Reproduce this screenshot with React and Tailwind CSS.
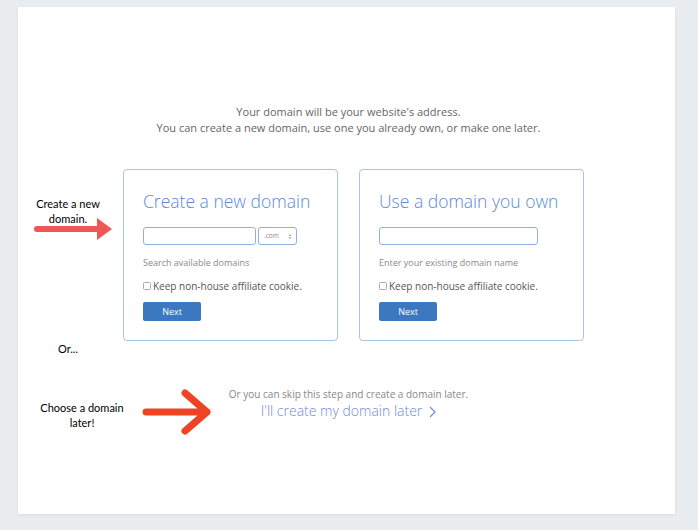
import React from "react";

function Card({ title, wide, hint }) {
  return (
    <div
      className={`${wide ? "w-[225px]" : "w-[215px]"} h-[172px] border border-[#a9c3ea] rounded-[4px] pt-[20px] pl-[19px] pr-[12px] flex flex-col`}
    >
      <div className="text-[17.5px] leading-[23px] text-[#5a8ad9] font-light whitespace-nowrap">{title}</div>
      <div className="flex gap-[2px] mt-[14px]">
        <div className={`${wide ? "w-[159px]" : "w-[113px]"} h-[18px] border border-[#8fb0e2] rounded-[3px] bg-white`} />
        {!wide && (
          <div className="w-[39px] h-[18px] border border-[#8fb0e2] rounded-[3px] bg-white flex items-center justify-between pl-[5px] pr-[4px]">
            <span className="text-[6.5px] text-[#888]">.com</span>
            <svg width="4" height="7" viewBox="0 0 4 7">
              <path d="M0.5 2.8 L2 1 L3.5 2.8 Z M0.5 4.2 L2 6 L3.5 4.2 Z" fill="#999" />
            </svg>
          </div>
        )}
      </div>
      <div className="text-[9px] leading-[14px] text-[#8a8a8a] mt-[11px]">{hint}</div>
      <div className="flex items-center mt-[9px] gap-[2px]">
        <div className="w-[8px] h-[8px] border border-[#aaa] rounded-[1.5px] bg-white" />
        <span className="text-[10px] leading-[14px] text-[#555]">Keep non-house affiliate cookie.</span>
      </div>
      <div className="mt-[9px] w-[58px] h-[19px] bg-[#3b78c0] rounded-[2px] flex items-center justify-center text-white text-[9px]">
        Next
      </div>
    </div>
  );
}

export default function App() {
  return (
    <div
      className="w-[698px] h-[530px] bg-[#e9edf0] pt-[7px] pl-[18px]"
      style={{ fontFamily: '"Open Sans", sans-serif' }}
    >
      <div className="relative w-[657px] h-[507px] bg-white shadow-[0_1px_3px_rgba(0,0,0,0.08)] pt-[97px] flex flex-col">
        <div className="pl-[4px] text-center text-[11px] leading-[16px] text-[#666]">
          <div>Your domain will be your website's address.</div>
          <div>You can create a new domain, use one you already own, or make one later.</div>
        </div>

        <div className="flex gap-[21px] ml-[105px] mt-[33px]">
          <Card title="Create a new domain" hint="Search available domains" />
          <Card title="Use a domain you own" hint="Enter your existing domain name" wide />
        </div>

        <div className="pl-[4px] text-center mt-[46px]">
          <div className="text-[10px] leading-[14px] text-[#888]">
            Or you can skip this step and create a domain later.
          </div>
          <div className="text-[14px] leading-[18px] text-[#7189e2] font-light mt-[1px]">
            I'll create my domain later
            <span className="inline-block ml-[7px] align-middle">
              <svg width="7" height="12" viewBox="0 0 7 12">
                <path d="M1 1 L6 6 L1 11" stroke="#7189e2" strokeWidth="1.2" fill="none" />
              </svg>
            </span>
          </div>
        </div>

        {/* Annotation overlays */}
        <div
          className="absolute left-[0px] top-[189px] w-[100px] text-center text-[11px] leading-[15px] text-black"
          style={{ fontFamily: "Lato, sans-serif" }}
        >
          Create a new
          <br />
          domain.
        </div>
        <svg className="absolute left-[16px] top-[210px]" width="80" height="24" viewBox="0 0 80 24">
          <path
            d="M3 9 L63 9 L63 1 L78 12 L63 23 L63 15 L3 15 Q0 15 0 12 Q0 9 3 9 Z"
            fill="#f05656"
            strokeLinejoin="round"
          />
        </svg>
        <div
          className="absolute left-[0px] top-[334px] w-[100px] text-center text-[11px] leading-[15px] text-black"
          style={{ fontFamily: "Lato, sans-serif" }}
        >
          Or...
        </div>
        <div
          className="absolute left-[4px] top-[393px] w-[120px] text-center text-[11px] leading-[15px] text-black"
          style={{ fontFamily: "Lato, sans-serif" }}
        >
          Choose a domain
          <br />
          later!
        </div>
        <svg className="absolute left-[124px] top-[382px]" width="70" height="46" viewBox="0 0 70 46">
          <path
            d="M4 23 L65 23 M43 4 L65 23 L43 42"
            stroke="#ee4423"
            strokeWidth="7"
            strokeLinecap="round"
            strokeLinejoin="round"
            fill="none"
          />
        </svg>
      </div>
    </div>
  );
}
